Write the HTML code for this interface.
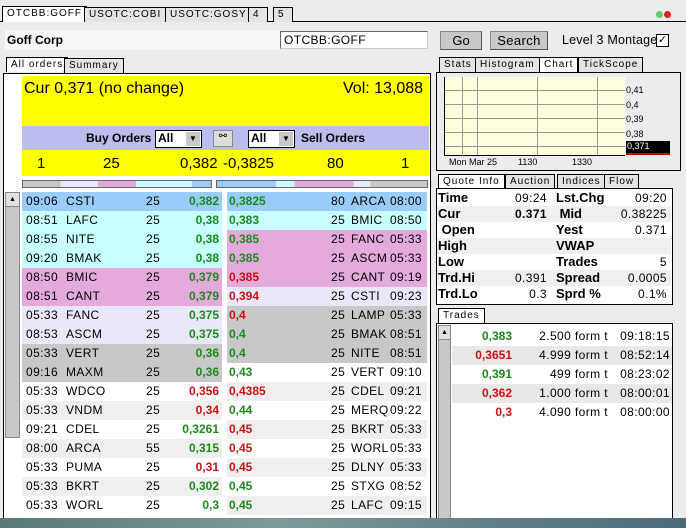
<!DOCTYPE html><html><head><meta charset="utf-8"><style>
*{margin:0;padding:0;box-sizing:border-box}
body{width:686px;height:528px;overflow:hidden;background:#ececec;font-family:"Liberation Sans",sans-serif;font-size:11px;position:relative;color:#000}
.a{position:absolute}
.tab{position:absolute;height:15px;border:1px solid #000;border-bottom:none;background:#e4e4e4;font-size:10px;letter-spacing:1px;padding:1px 4px;white-space:nowrap;line-height:12px}
.b{font-weight:bold}
.row{position:absolute;height:19px;font-size:12px;line-height:19px;white-space:nowrap;letter-spacing:.4px}
.row span{position:absolute}
.g{color:#1a8a1a;font-weight:bold;letter-spacing:0}.r{color:#cc1111;font-weight:bold;letter-spacing:0}
.btn{position:absolute;background:#c8c8c8;border:1px solid #888;border-right-color:#555;border-bottom-color:#555;font-size:13px;text-align:center;line-height:17px}
.qi{position:absolute;left:437px;width:234px;height:16px;font-size:13px;line-height:16px}
.qi span{position:absolute}
</style></head><body>
<div class="a" style="left:0;top:21px;width:686px;height:1px;background:#000"></div>
<div class="tab" style="left:2px;top:6px;background:#fff;height:16px">OTCBB:GOFF</div>
<div class="tab" style="left:84px;top:7px">USOTC:COBI</div>
<div class="tab" style="left:165px;top:7px">USOTC:GOSY</div>
<div class="tab" style="left:248px;top:7px;width:20px">4</div>
<div class="tab" style="left:273px;top:7px;width:20px">5</div>
<div class="a" style="left:656px;top:11px;width:7px;height:7px;border-radius:50%;background:#6c6"></div>
<div class="a" style="left:664px;top:11px;width:7px;height:7px;border-radius:50%;background:#d22"></div>
<div class="a" style="left:5px;top:30px;width:275px;height:20px;background:#f6f6f6"></div>
<div class="a b" style="left:7px;top:33px;font-size:12px">Goff Corp</div>
<div class="a" style="left:280px;top:31px;width:148px;height:18px;background:#fff;border:1px solid #666;border-right-color:#ccc;border-bottom-color:#ccc;font-size:12px;padding:1px 3px;letter-spacing:.4px">OTCBB:GOFF</div>
<div class="btn" style="left:440px;top:31px;width:42px;height:19px">Go</div>
<div class="btn" style="left:490px;top:31px;width:58px;height:19px;letter-spacing:.4px">Search</div>
<div class="a" style="left:562px;top:33px;font-size:12.5px;letter-spacing:.2px">Level 3 Montage</div>
<div class="a" style="left:656px;top:34px;width:13px;height:13px;border:1px solid #000;background:#fff;font-size:11px;line-height:11px;text-align:center">✓</div>
<div class="tab" style="left:6px;top:57px;background:#fff">All orders</div>
<div class="tab" style="left:64px;top:58px">Summary</div>
<div class="a" style="left:3px;top:73px;width:428px;height:450px;border:1px solid #000;background:#fff"></div>
<div class="a" style="left:22px;top:76px;width:407px;height:50px;background:#ff0"></div>
<div class="a" style="left:24px;top:80px;font-size:16px">Cur 0,371 (no change)</div>
<div class="a" style="left:343px;top:80px;font-size:16px">Vol: 13,088</div>
<div class="a" style="left:22px;top:126px;width:407px;height:24px;background:#bcbcee"></div>
<div class="a b" style="left:86px;top:131px;font-size:12px">Buy Orders</div>
<div class="a" style="left:155px;top:130px;width:47px;height:18px;background:#fff;border:1px solid #000;font-size:12px;font-weight:bold;padding-left:2px">All<div class="a" style="right:1px;top:1px;width:14px;height:14px;background:#c8c8c8;font-size:8px;text-align:center;line-height:14px">▼</div></div>
<div class="a" style="left:213px;top:130px;width:20px;height:17px;background:#ddd;border:1px solid #888;font-size:10px;text-align:center">⚯</div>
<div class="a" style="left:248px;top:130px;width:47px;height:18px;background:#fff;border:1px solid #000;font-size:12px;font-weight:bold;padding-left:2px">All<div class="a" style="right:1px;top:1px;width:14px;height:14px;background:#c8c8c8;font-size:8px;text-align:center;line-height:14px">▼</div></div>
<div class="a b" style="left:301px;top:131px;font-size:12px">Sell Orders</div>
<div class="a" style="left:22px;top:150px;width:407px;height:26px;background:#ff0"></div>
<div class="a" style="left:22px;top:155px;width:407px;font-size:15px"><span class="a" style="left:15px">1</span><span class="a" style="left:81px">25</span><span class="a" style="left:158px">0,382</span><span class="a" style="left:201px">-0,3825</span><span class="a" style="left:305px">80</span><span class="a" style="left:379px">1</span></div>
<div class="a" style="left:22px;top:180px;width:190px;height:8px;border:1px solid #666;background:linear-gradient(90deg,#c8c8c8 0 20%,#e8e8fa 20% 40%,#e4aadc 40% 60%,#c8ffff 60% 90%,#99ccf8 90%)"></div>
<div class="a" style="left:216px;top:180px;width:212px;height:8px;border:1px solid #666;background:linear-gradient(90deg,#99ccf8 0 28%,#c8ffff 28% 37%,#e4aadc 37% 65%,#e8e8fa 65% 73%,#c8c8c8 73%)"></div>
<div class="a" style="left:5px;top:192px;width:15px;height:246px;background:#c8c8c8;border:1px solid #888"></div>
<div class="a" style="left:5px;top:192px;width:15px;height:15px;background:#e0e0e0;border:1px solid #888;font-size:7px;text-align:center;line-height:13px">▲</div>
<div id="L"></div>
<div class="tab" style="left:439px;top:57px">Stats</div>
<div class="tab" style="left:475px;top:57px">Histogram</div>
<div class="tab" style="left:539px;top:57px;background:#fff">Chart</div>
<div class="tab" style="left:578px;top:57px">TickScope</div>
<div class="a" style="left:436px;top:72px;width:245px;height:99px;border:1px solid #000;background:#ececec"></div>
<div class="a" style="left:444px;top:77px;width:181px;height:79px;background:#ffffe0;border-left:1px solid #000;border-bottom:1px solid #000;background-image:linear-gradient(#999 1px,transparent 1px),linear-gradient(90deg,#999 1px,transparent 1px);background-size:100% 14px,60px 100%;background-position:0 13px,32px 0"></div>
<div class="a" style="left:462px;top:77px;width:1px;height:79px;background:#999"></div>
<div class="a" style="left:626px;top:83px;font-size:9px;line-height:14.5px">0,41<br>0,4<br>0,39<br>0,38</div>
<div class="a" style="left:626px;top:141px;width:44px;height:12px;background:#000;color:#fff;font-size:9px;padding-left:1px">0,371</div>
<div class="a" style="left:626px;top:153px;width:44px;height:2px;background:#c00"></div>
<div class="a" style="left:449px;top:157px;font-size:9px">Mon Mar 25</div>
<div class="a" style="left:518px;top:157px;font-size:9px">1130</div>
<div class="a" style="left:572px;top:157px;font-size:9px">1330</div>
<div class="tab" style="left:438px;top:174px;background:#fff">Quote Info</div>
<div class="tab" style="left:505px;top:174px">Auction</div>
<div class="tab" style="left:557px;top:174px">Indices</div>
<div class="tab" style="left:604px;top:174px">Flow</div>
<div class="a" style="left:436px;top:188px;width:237px;height:117px;border:1px solid #000;background:#fff"></div>
<div id="Q"></div>
<div class="tab" style="left:438px;top:308px;background:#fff">Trades</div>
<div class="a" style="left:436px;top:323px;width:237px;height:200px;border:1px solid #000;background:#fff"></div>
<div class="a" style="left:438px;top:325px;width:13px;height:195px;background:#c8c8c8;border:1px solid #888"></div>
<div class="a" style="left:438px;top:325px;width:13px;height:15px;background:#e0e0e0;border:1px solid #888;font-size:7px;text-align:center;line-height:13px">▲</div>
<div id="T"></div>
<div class="a" style="left:0;top:518px;width:686px;height:10px;background:linear-gradient(90deg,#5a7a7a,#7a9a9a 40%,#4a6a7a)"></div>
<script>
var L=[["09:06","CSTI","25","0,382","g","#99ccf8","0,3825","g","80","ARCA","08:00","#99ccf8"],
["08:51","LAFC","25","0,38","g","#c8ffff","0,383","g","25","BMIC","08:50","#c8ffff"],
["08:55","NITE","25","0,38","g","#c8ffff","0,385","g","25","FANC","05:33","#e4aadc"],
["09:20","BMAK","25","0,38","g","#c8ffff","0,385","g","25","ASCM","05:33","#e4aadc"],
["08:50","BMIC","25","0,379","g","#e4aadc","0,385","r","25","CANT","09:19","#e4aadc"],
["08:51","CANT","25","0,379","g","#e4aadc","0,394","r","25","CSTI","09:23","#e8e8fa"],
["05:33","FANC","25","0,375","g","#e8e8fa","0,4","r","25","LAMP","05:33","#c8c8c8"],
["08:53","ASCM","25","0,375","g","#e8e8fa","0,4","g","25","BMAK","08:51","#c8c8c8"],
["05:33","VERT","25","0,36","g","#c8c8c8","0,4","g","25","NITE","08:51","#c8c8c8"],
["09:16","MAXM","25","0,36","g","#c8c8c8","0,43","g","25","VERT","09:10","#fff"],
["05:33","WDCO","25","0,356","r","#fff","0,4385","r","25","CDEL","09:21","#efefef"],
["05:33","VNDM","25","0,34","r","#efefef","0,44","g","25","MERQ","09:22","#fff"],
["09:21","CDEL","25","0,3261","g","#fff","0,45","r","25","BKRT","05:33","#efefef"],
["08:00","ARCA","55","0,315","g","#efefef","0,45","r","25","WORL","05:33","#fff"],
["05:33","PUMA","25","0,31","r","#fff","0,45","r","25","DLNY","05:33","#efefef"],
["05:33","BKRT","25","0,302","g","#efefef","0,45","g","25","STXG","08:52","#fff"],
["05:33","WORL","25","0,3","g","#fff","0,45","g","25","LAFC","09:15","#efefef"]];
var h="";L.forEach(function(r,i){var y=192+i*19;
h+='<div class="row" style="left:22px;top:'+y+'px;width:200px;background:'+r[5]+'"><span style="left:4px">'+r[0]+'</span><span style="left:44px">'+r[1]+'</span><span style="left:124px">'+r[2]+'</span><span class="'+r[4]+'" style="right:3px">'+r[3]+'</span></div>';
h+='<div class="row" style="left:227px;top:'+y+'px;width:200px;background:'+r[11]+'"><span class="'+r[7]+'" style="left:2px">'+r[6]+'</span><span style="left:104px">'+r[8]+'</span><span style="left:124px">'+r[9]+'</span><span style="right:5px">'+r[10]+'</span></div>';});
document.getElementById("L").innerHTML=h;
var Q=[["Time","09:24","Lst.Chg","09:20"],["Cur","<b>0.371</b>","&nbsp;Mid","0.38225"],["&nbsp;Open","","Yest","0.371"],["High","","VWAP",""],["Low","","Trades","5"],["Trd.Hi","0.391","Spread","0.0005"],["Trd.Lo","0.3","Sprd %","0.1%"]];
h="";Q.forEach(function(r,i){h+='<div class="qi" style="top:'+(190+i*16)+'px;background:'+(i%2?'#efefef':'#fff')+'"><span class="b" style="left:1px">'+r[0]+'</span><span style="right:124px;font-size:12px;letter-spacing:.4px">'+r[1]+'</span><span class="b" style="left:119px">'+r[2]+'</span><span style="right:4px;font-size:12px;letter-spacing:.4px">'+r[3]+'</span></div>';});
document.getElementById("Q").innerHTML=h;
var T=[["0,383","g","2.500 form t","09:18:15"],["0,3651","r","4.999 form t","08:52:14"],["0,391","g","499 form t","08:23:02"],["0,362","r","1.000 form t","08:00:01"],["0,3","r","4.090 form t","08:00:00"]];
h="";T.forEach(function(r,i){h+='<div class="row" style="left:452px;top:'+(327+i*19)+'px;width:220px;background:'+(i%2?'#e8e8e8':'#fff')+'"><span class="'+r[1]+'" style="right:160px">'+r[0]+'</span><span style="right:64px">'+r[2]+'</span><span style="right:2px">'+r[3]+'</span></div>';});
document.getElementById("T").innerHTML=h;
</script>
</body></html>
